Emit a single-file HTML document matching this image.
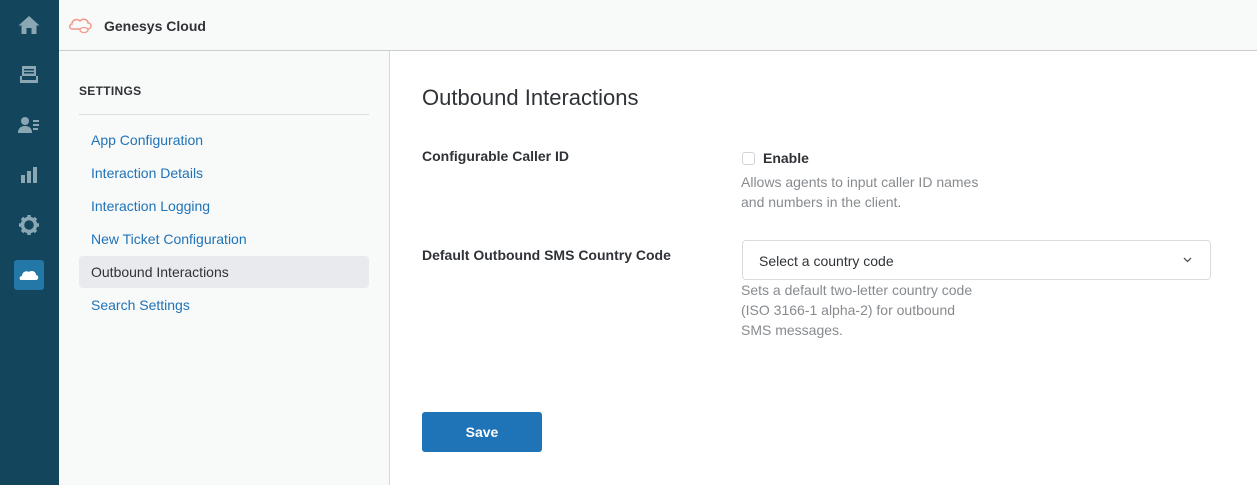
<!DOCTYPE html>
<html><head><style>
*{box-sizing:border-box;margin:0;padding:0}
body{width:1257px;height:485px;overflow:hidden;font-family:"Liberation Sans",sans-serif;background:#fff;position:relative}
.side{position:absolute;left:0;top:0;width:59px;height:485px;background:#13465d}
.ic{position:absolute;left:17px;width:24px;height:24px}
.hdr{position:absolute;left:59px;top:0;right:0;height:51px;background:#f8f9f9;border-bottom:1px solid #c9cdd0}
.hdr span{position:absolute;left:45px;top:18px;font-size:14px;font-weight:bold;color:#2f3337}
.nav{position:absolute;left:59px;top:51px;width:331px;height:434px;background:#f8f9f9;border-right:1px solid #d6d9dc}
.nav h4{position:absolute;left:20px;top:33px;font-size:12px;font-weight:bold;color:#2f3337;letter-spacing:.3px}
.nav hr{position:absolute;left:20px;top:63px;width:290px;border:0;border-top:1px solid #dcdfe2}
.nav a{position:absolute;left:20px;width:290px;height:32px;padding-left:12px;line-height:32px;font-size:14px;color:#1f73b7;text-decoration:none;border-radius:4px}
.nav a.act{background:#e8eaed;color:#2f3337}
h1{position:absolute;left:422px;top:85px;font-size:22px;font-weight:normal;color:#2f3337}
.lbl{position:absolute;left:422px;font-size:14px;font-weight:bold;color:#2f3337}
.hint{position:absolute;left:741px;font-size:14px;color:#878b8f;line-height:20px}
.sel{position:absolute;left:742px;top:240px;width:469px;height:40px;border:1px solid #d8dcde;border-radius:4px;font-size:14px;color:#2f3337;padding:12px 0 0 16px}
.btn{position:absolute;left:422px;top:412px;width:120px;height:40px;background:#1f73b7;border-radius:3px;color:#fff;font-size:14px;font-weight:bold;text-align:center;line-height:40px}
</style></head><body>
<div class="side">
<svg class="ic" style="top:13px" viewBox="0 0 24 24"><path d="M12 3L1.5 12.5h3V21h5v-6h5v6h5v-8.5h3z" fill="#8ba7b3"/></svg>
<svg class="ic" style="top:63px" viewBox="0 0 24 24"><path d="M5 3h14v10H5zM7 6h10v1.5H7zM7 9h10v1.5H7zM3 13h2v4h14v-4h2v7H3z" fill="#8ba7b3" fill-rule="evenodd"/><rect x="7" y="6" width="10" height="1.5" fill="#13465d"/><rect x="7" y="9" width="10" height="1.5" fill="#13465d"/></svg>
<svg class="ic" style="top:113px" viewBox="0 0 24 24"><circle cx="8" cy="8" r="4" fill="#8ba7b3"/><path d="M1 20c0-5 3-7 7-7s7 2 7 7z" fill="#8ba7b3"/><rect x="16" y="7" width="6" height="2" fill="#8ba7b3"/><rect x="16" y="11" width="6" height="2" fill="#8ba7b3"/><rect x="16" y="15" width="5" height="2" fill="#8ba7b3"/></svg>
<svg class="ic" style="top:163px" viewBox="0 0 24 24"><rect x="4" y="12" width="4" height="8" fill="#8ba7b3"/><rect x="10" y="8" width="4" height="12" fill="#8ba7b3"/><rect x="16" y="4" width="4" height="16" fill="#8ba7b3"/></svg>
<svg class="ic" style="top:213px" viewBox="0 0 24 24"><circle cx="12" cy="12" r="6.5" fill="none" stroke="#8ba7b3" stroke-width="3.5"/><g stroke="#8ba7b3" stroke-width="3.5"><path d="M12 2v4M12 18v4M2 12h4M18 12h4M5 5l3 3M16 16l3 3M19 5l-3 3M8 16l-3 3"/></g></svg>
<div style="position:absolute;left:14px;top:260px;width:30px;height:30px;background:#2378a8;border-radius:3px"></div>
<svg class="ic" style="top:263px;left:17px" viewBox="0 0 24 24"><path d="M4 17c-2 0-2-4 1-4 0-4 4-6 7-4 2-2 7-1 7 3 3 0 3 5 0 5z" fill="#fff"/></svg>
</div>
<div class="hdr"><svg style="position:absolute;left:9px;top:16px" width="26" height="18" viewBox="0 0 26 18"><path d="M4 13c-3 0-3-5 0-5 0-4 5-6 8-3 2-3 8-2 8 2 4 0 4 6 0 6z" fill="none" stroke="#f09a8a" stroke-width="1.5"/><ellipse cx="16" cy="14" rx="4" ry="2.5" fill="#fff" stroke="#f09a8a" stroke-width="1.3"/></svg><span>Genesys Cloud</span></div>
<div class="nav">
<h4>SETTINGS</h4><hr>
<a style="top:73px">App Configuration</a>
<a style="top:106px">Interaction Details</a>
<a style="top:139px">Interaction Logging</a>
<a style="top:172px">New Ticket Configuration</a>
<a class="act" style="top:205px">Outbound Interactions</a>
<a style="top:238px">Search Settings</a>
</div>
<h1>Outbound Interactions</h1>
<div class="lbl" style="top:148px">Configurable Caller ID</div>
<div style="position:absolute;left:742px;top:152px;width:13px;height:13px;border:1px solid #d3d6d9;border-radius:3px"></div>
<div class="lbl" style="left:763px;top:150px">Enable</div>
<div class="hint" style="top:172px">Allows agents to input caller ID names<br>and numbers in the client.</div>
<div class="lbl" style="top:247px">Default Outbound SMS Country Code</div>
<div class="sel">Select a country code<svg style="position:absolute;right:18px;top:16px" width="9" height="6" viewBox="0 0 9 6"><path d="M1 1l3.5 3.5L8 1" fill="none" stroke="#555" stroke-width="1.3"/></svg></div>
<div class="hint" style="top:280px">Sets a default two-letter country code<br>(ISO 3166-1 alpha-2) for outbound<br>SMS messages.</div>
<div class="btn">Save</div>
</body></html>
